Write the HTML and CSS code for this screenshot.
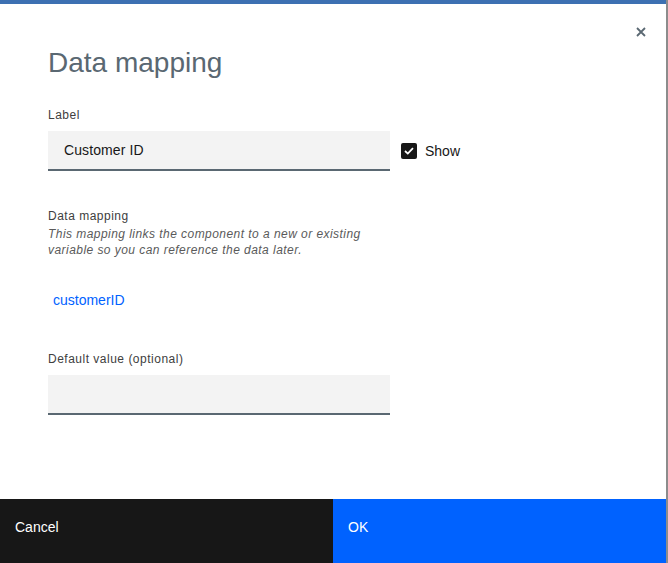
FILE: index.html
```html
<!DOCTYPE html>
<html>
<head>
<meta charset="utf-8">
<link rel="stylesheet" href="styles.css">
</head>
<body>
<div class="modal">
  <div class="modal-body">
    <div class="header">
      <h1 class="title">Data mapping</h1>
      <button class="close" aria-label="Close">
        <svg width="10" height="10" viewBox="0 0 10 10"><path d="M1 1L9 9M9 1L1 9" stroke="#5a6872" stroke-width="1.8"/></svg>
      </button>
    </div>
    <div class="field">
      <div class="label">Label</div>
      <div class="row">
        <div class="input">Customer ID</div>
        <div class="check">
          <span class="box"><svg width="10" height="8" viewBox="0 0 10 8"><path d="M1 4L3.8 6.6L9 1.2" fill="none" stroke="#fff" stroke-width="1.8"/></svg></span>
          <span class="check-text">Show</span>
        </div>
      </div>
    </div>
    <div class="field mapping">
      <div class="label">Data mapping</div>
      <div class="helper">This mapping links the component to a new or existing variable so you can reference the data later.</div>
      <a class="link">customerID</a>
    </div>
    <div class="field">
      <div class="label">Default value (optional)</div>
      <div class="input"></div>
    </div>
  </div>
  <div class="footer">
    <button class="btn cancel">Cancel</button>
    <button class="btn ok">OK</button>
  </div>
</div>
</body>
</html>
```

FILE: styles.css
```css
html, body {
  margin: 0;
  padding: 0;
  height: 100%;
  background: #8c8c8c;
  font-family: "Liberation Sans", Arial, sans-serif;
}
.modal {
  width: 666px;
  height: 563px;
  background: #fff;
  border-top: 4px solid #3d70b2;
  box-sizing: border-box;
  display: flex;
  flex-direction: column;
}
.modal-body {
  flex: 1;
  padding: 0 0 0 48px;
}
.header {
  display: flex;
  justify-content: space-between;
  align-items: flex-start;
}
.title {
  margin: 41px 0 0 0;
  font-size: 28px;
  font-weight: 400;
  color: #5a6872;
  line-height: 36px;
}
.close {
  border: 0;
  background: none;
  padding: 0;
  margin: 23px 20px 0 0;
  width: 10px;
  height: 10px;
  display: flex;
}
.label {
  font-size: 12px;
  color: #404040;
  letter-spacing: 0.5px;
  line-height: 16px;
  margin-top: 26px;
  margin-bottom: 8px;
}
.row {
  display: flex;
  align-items: center;
}
.input {
  width: 342px;
  height: 40px;
  box-sizing: border-box;
  background: #f3f3f3;
  border-bottom: 2px solid #5a6872;
  padding: 0 16px;
  font-size: 14px;
  color: #171717;
  display: flex;
  align-items: center;
  letter-spacing: 0.1px;
}
.check {
  display: flex;
  align-items: center;
  margin-left: 11px;
}
.box {
  width: 16px;
  height: 16px;
  background: #171717;
  border-radius: 2px;
  display: flex;
  align-items: center;
  justify-content: center;
}
.check-text {
  margin-left: 8px;
  font-size: 14px;
  color: #171717;
}
.mapping .label {
  margin-top: 37px;
  margin-bottom: 2px;
}
.helper {
  font-size: 12px;
  font-style: italic;
  color: #5a5a5a;
  line-height: 16px;
  width: 340px;
  letter-spacing: 0.45px;
}
.link {
  display: block;
  margin: 33px 0 0 5px;
  font-size: 14px;
  color: #0062ff;
  line-height: 18px;
}
.mapping + .field .label {
  margin-top: 42px;
  margin-bottom: 8px;
}
.footer {
  display: flex;
  height: 64px;
}
.btn {
  flex: 1;
  border: 0;
  margin: 0;
  font-family: inherit;
  font-size: 14px;
  line-height: 18px;
  color: #fff;
  text-align: left;
  padding: 19px 15px 0 15px;
  display: flex;
  align-items: flex-start;
}
.cancel { background: #171717; }
.ok { background: #0062ff; }
```
